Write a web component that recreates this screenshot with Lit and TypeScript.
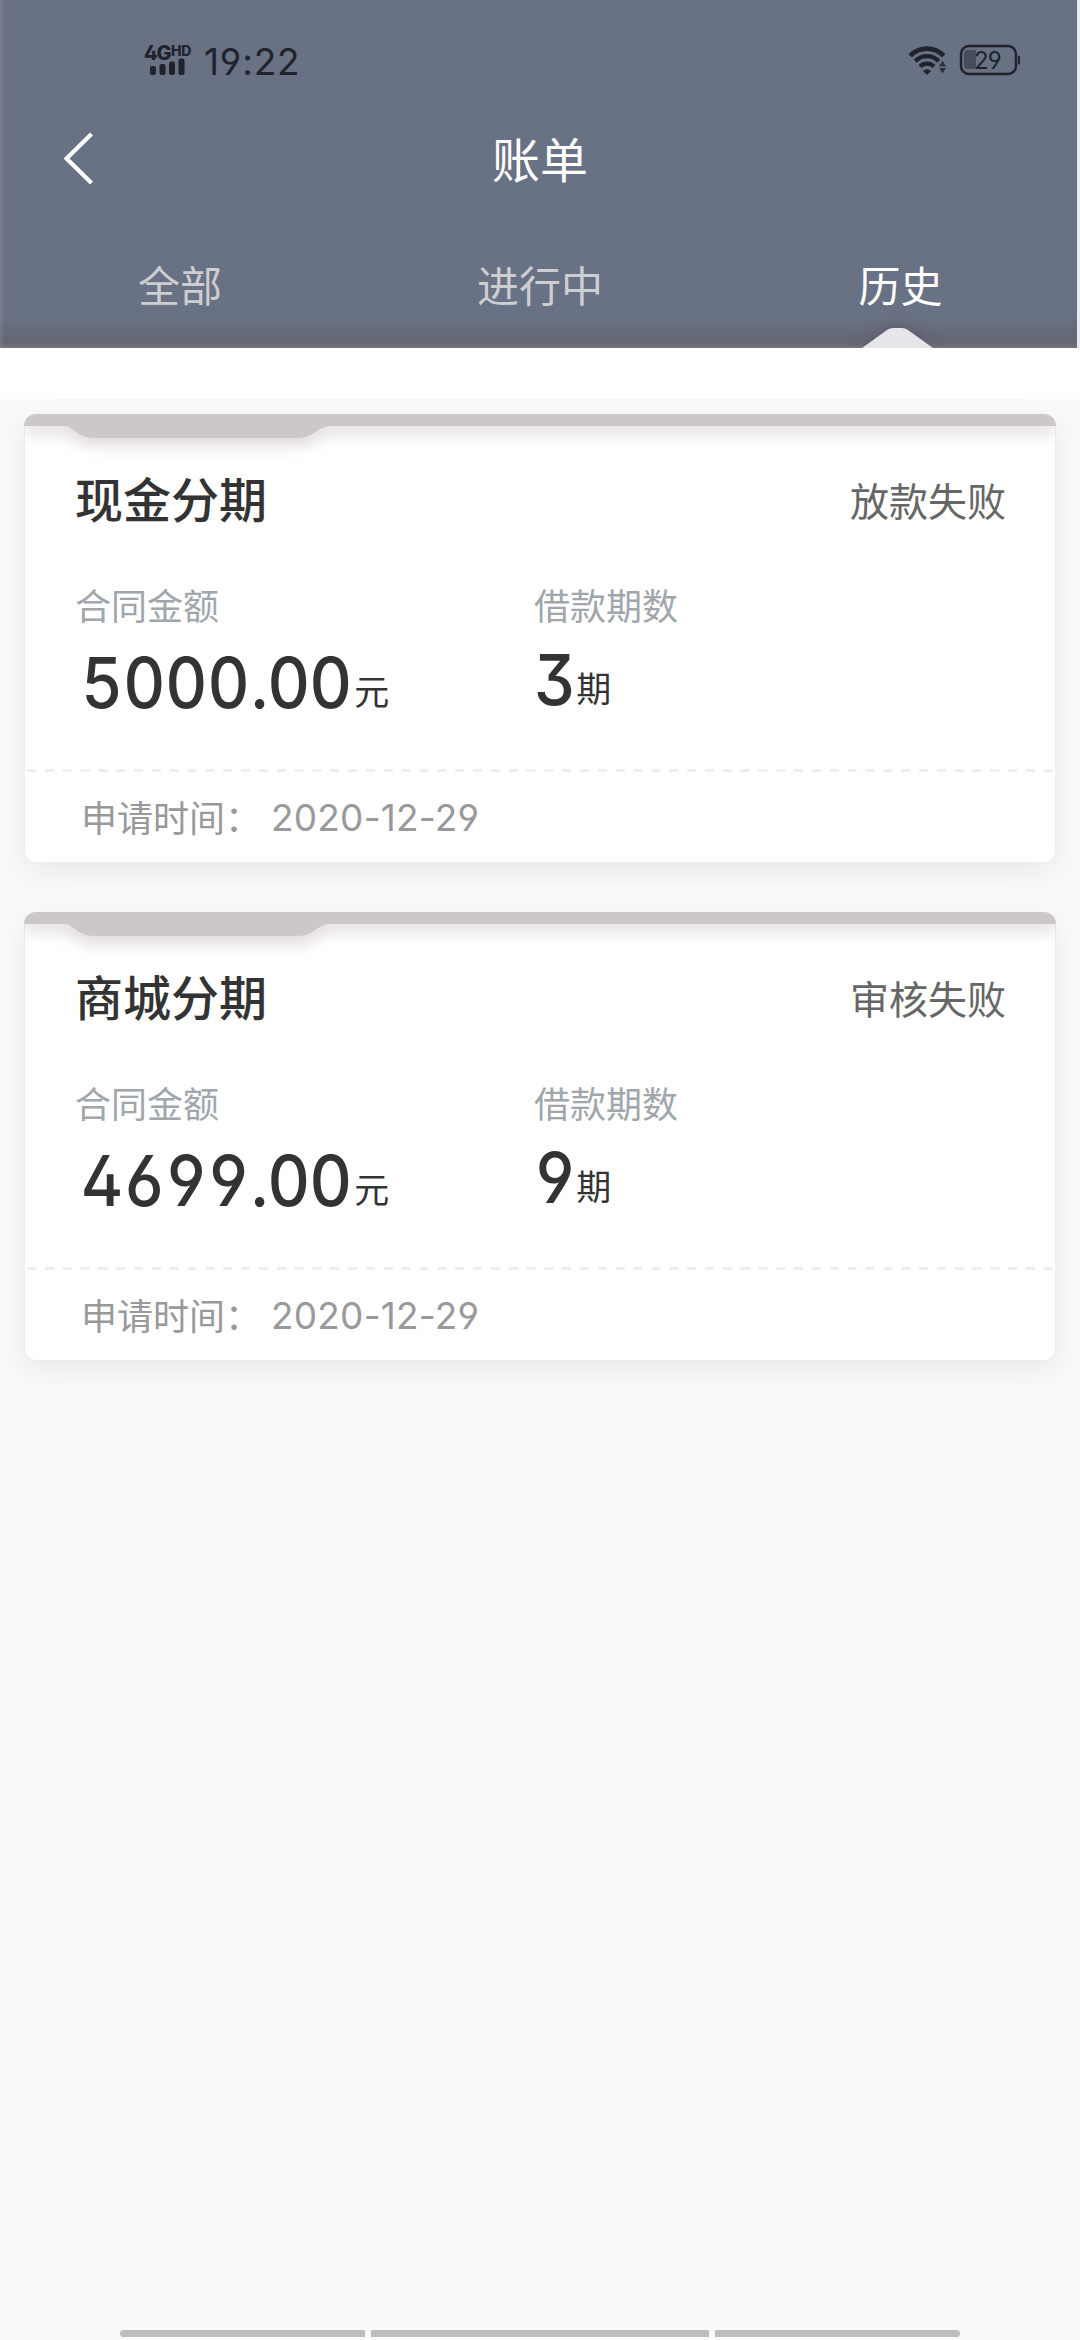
import { LitElement, html, css } from "lit";
import { customElement, property, state } from "lit/decorators.js";
import { classMap } from "lit/directives/class-map.js";

interface Bill {
  name: string;
  status: string;
  amount: string;
  periods: string;
  date: string;
}

@customElement("phone-status")
class PhoneStatus extends LitElement {
  static styles = css`
    :host {
      display: flex;
      justify-content: space-between;
      height: 120px;
      box-sizing: border-box;
      padding: 40px 56px 0 144px;
      color: #20232d;
      font-family: Inter, "Liberation Sans", sans-serif;
      font-feature-settings: "ss01";
    }
    .group {
      display: flex;
      height: 40px;
    }
    .signal {
      display: flex;
      flex-direction: column;
      width: 49px;
      padding-top: 4px;
    }
    .network {
      display: flex;
      height: 15px;
      font-weight: 800;
    }
    .gen {
      width: 27px;
      font-size: 20px;
      line-height: 18px;
      letter-spacing: -1.2px;
    }
    .hd {
      font-size: 14px;
      line-height: 13px;
      letter-spacing: -0.2px;
    }
    .bars {
      margin: -1px 0 0 5px;
    }
    .time {
      margin-left: 11px;
      font-size: 37px;
      line-height: 43px;
      letter-spacing: 0.8px;
    }
    .wifi {
      margin: 5px 11px 0 0;
    }
    .battery {
      position: relative;
      width: 62px;
      height: 32px;
      margin-top: 4px;
    }
    .level {
      position: absolute;
      left: 15px;
      top: 0;
      font-size: 24px;
      line-height: 33px;
      letter-spacing: -1px;
    }
  `;

  render() {
    return html`
      <div class="group">
        <div class="signal">
          <div class="network"><span class="gen">4G</span><span class="hd">HD</span></div>
          <svg class="bars" width="36" height="17" viewBox="0 0 36 17" fill="currentColor">
            <rect x="1" y="8" width="6" height="9" rx="2" />
            <rect x="10.5" y="6" width="6" height="11" rx="2" />
            <rect x="20" y="3.5" width="6" height="13.5" rx="2" />
            <rect x="29.500" y="0.500" width="6" height="16.500" rx="2" />
          </svg>
        </div>
        <span class="time">19:22</span>
      </div>
      <div class="group">
        <svg class="wifi" width="40" height="32" viewBox="0 0 40 32" fill="none">
          <path d="M2.300 10.800A23 23 0 0 1 35.700 10.800" stroke="currentColor" stroke-width="4.600" />
          <path d="M7.300 16.300A16 16 0 0 1 30.700 16.300" stroke="currentColor" stroke-width="4.300" />
          <path d="M12 21.500A10 10 0 0 1 26 21.500" stroke="currentColor" stroke-width="4.200" />
          <path d="M19 30L15 26Q19 22.500 23 26Z" fill="currentColor" />
          <path d="M34.500 15.500L38 21.500H31ZM34.500 28.500L38 22.900H31Z" fill="currentColor" opacity="0.800" />
        </svg>
        <div class="battery">
          <svg width="62" height="32" viewBox="0 0 62 32" fill="none">
            <path d="M17 6H9Q5 6 5 10V21Q5 25 9 25H17Z" fill="#474c5b" />
            <rect x="2" y="2" width="55" height="28" rx="8" stroke="currentColor" stroke-width="2.400" />
            <path d="M59 11.500Q61 11.500 61 13V19Q61 20.500 59 20.500Z" fill="currentColor" />
          </svg>
          <span class="level">29</span>
        </div>
      </div>
    `;
  }
}

@customElement("bill-card")
class BillCard extends LitElement {
  @property({ attribute: false }) bill!: Bill;

  static styles = css`
    :host {
      display: block;
      height: 449px;
      box-sizing: border-box;
      border-radius: 12px;
      background: #fff;
      box-shadow: 0 9px 30px rgba(0, 0, 0, 0.075);
    }
    .card {
      display: flex;
      flex-direction: column;
      height: 449px;
      border-radius: 12px;
      overflow: hidden;
      box-shadow: inset 0 0 0 1px #ededed;
    }
    .cap {
      flex: none;
      height: 61px;
      overflow: hidden;
    }
    .cap svg {
      display: block;
      filter: drop-shadow(0 7px 8px rgba(90, 70, 60, 0.21));
    }
    .head {
      display: flex;
      justify-content: space-between;
      align-items: center;
      height: 50px;
      margin-top: -3px;
      padding: 0 50px 0 51px;
    }
    .name {
      font-size: 48px;
      line-height: 50px;
      font-weight: 500;
      color: #333;
    }
    .status {
      font-size: 39px;
      line-height: 50px;
      color: #666;
      margin-top: 3px;
    }
    .figures {
      display: grid;
      grid-template-columns: 459px 1fr;
      padding: 57px 51px 0;
      height: 190px;
      box-sizing: border-box;
    }
    .label {
      font-size: 36px;
      line-height: 50px;
      color: #a0a6ac;
    }
    .value {
      display: flex;
      align-items: baseline;
      height: 70px;
      margin-top: 16px;
      line-height: 70px;
      color: #333;
    }
    .amount {
      padding-left: 6px;
      margin-top: 19px;
    }
    .number {
      font-family: Inter, sans-serif;
      font-feature-settings: "ss01";
      font-size: 70px;
      font-weight: 500;
      transform: scaleX(0.93);
      transform-origin: left;
      margin-right: -3px;
    }
    .amount .number {
      margin-right: -18px;
    }
    .whole {
      font-feature-settings: "ss01", "tnum";
    }
    .unit {
      position: relative;
      top: -3px;
      font-size: 35px;
    }
    .divider {
      display: block;
      margin: 57px 0 0 2px;
    }
    .foot {
      display: flex;
      align-items: center;
      height: 90px;
      padding-left: 57px;
      font-size: 36px;
      color: #999;
    }
    .caption {
      margin-top: -3px;
    }
    .date {
      font-family: Inter, sans-serif;
      font-feature-settings: "ss01";
      font-size: 37px;
      letter-spacing: 0.2px;
      margin-left: 10px;
    }
  `;

  render() {
    const b = this.bill;
    const [whole, cents] = b.amount.split(".");
    return html`
      <article class="card">
        <div class="cap">
          <svg width="1032" height="24" viewBox="0 0 1032 24" overflow="visible">
            <path
              d="M0 0H1032V12H308C292 12 291 24 273 24H71C52 24 51 12 39 12H0Z"
              fill="#ccc8c7"
            />
          </svg>
        </div>
        <div class="head">
          <span class="name">${b.name}</span>
          <span class="status">${b.status}</span>
        </div>
        <div class="figures">
          <div>
            <div class="label">合同金额</div>
            <div class="value amount">
              <span class="number"><span class="whole">${whole}</span>.${cents}</span><span class="unit">元</span>
            </div>
          </div>
          <div>
            <div class="label">借款期数</div>
            <div class="value">
              <span class="number"><span class="whole">${b.periods}</span></span><span class="unit">期</span>
            </div>
          </div>
        </div>
        <svg class="divider" width="1028" height="3">
          <path d="M1 1.500H1027" stroke="#eee" stroke-width="3" stroke-dasharray="9 8.840" />
        </svg>
        <div class="foot"><span class="caption">申请时间：</span><span class="date">${b.date}</span></div>
      </article>
    `;
  }
}

@customElement("app-root")
class AppRoot extends LitElement {
  @state() private active = 2;

  private tabs = ["全部", "进行中", "历史"];

  private bills: Bill[] = [
    { name: "现金分期", status: "放款失败", amount: "5000.00", periods: "3", date: "2020-12-29" },
    { name: "商城分期", status: "审核失败", amount: "4699.00", periods: "9", date: "2020-12-29" },
  ];

  static styles = css`
    :host {
      display: flex;
      flex-direction: column;
      width: 1080px;
      height: 2340px;
      overflow: hidden;
      background: #fafafa;
      font-family: "Noto Sans CJK SC", "Noto Sans", sans-serif;
    }
    .top {
      flex: none;
      height: 348px;
      box-sizing: border-box;
      overflow: hidden;
      border-right: 3px solid #e9e9f0;
      background:
        linear-gradient(to right, rgba(255, 255, 255, 0.1), rgba(255, 255, 255, 0) 4px),
        linear-gradient(to bottom, rgba(98, 98, 112, 0) 318px, rgba(98, 98, 109, 0.8) 343px, #74747c 348px),
        #697184;
    }
    .bar {
      display: grid;
      grid-template-columns: 120px 1fr 117px;
      align-items: center;
      height: 80px;
      color: #fff;
    }
    .back {
      display: block;
      margin: -4px 0 0 60px;
    }
    .title {
      text-align: center;
      font-size: 48px;
      line-height: 80px;
      margin-top: -6px;
    }
    .tabs {
      display: grid;
      grid-template-columns: 360px 360px 357px;
      height: 148px;
    }
    .tab {
      display: flex;
      flex-direction: column;
      align-items: center;
      justify-content: space-between;
      padding-top: 54px;
      font-size: 42px;
      line-height: 60px;
      color: #ccced1;
    }
    .tab.on {
      color: #fff;
      padding-left: 4px;
    }
    .pointer {
      display: block;
      margin-right: 5px;
      filter: drop-shadow(0 -2px 7px rgba(80, 76, 86, 0.45));
    }
    .strip {
      flex: none;
      height: 51px;
      background: #fff;
    }
    .list {
      flex: 1;
      display: flex;
      flex-direction: column;
      gap: 49px;
      padding: 15px 24px 0;
    }
    .nav {
      display: flex;
      justify-content: center;
      gap: 6px;
      padding-bottom: 3px;
    }
    .seg {
      width: 245px;
      height: 7px;
      background: #bdbdbd;
    }
    .seg.mid {
      width: 338px;
    }
    .seg.first {
      border-radius: 4px 0 0 4px;
    }
    .seg.last {
      border-radius: 0 4px 4px 0;
    }
  `;

  render() {
    return html`
      <header class="top">
        <phone-status></phone-status>
        <div class="bar">
          <svg class="back" width="36" height="56" viewBox="0 0 36 56" fill="none">
            <path d="M31.500 4L6.500 28.500L31.500 53" stroke="#fff" stroke-width="4.200" />
          </svg>
          <span class="title">账单</span>
        </div>
        <nav class="tabs">
          ${this.tabs.map(
            (t, i) => html`
              <div class=${classMap({ tab: true, on: i === this.active })} @click=${() => (this.active = i)}>
                <span>${t}</span>
                ${i === this.active
                  ? html`<svg class="pointer" width="72" height="20" viewBox="0 0 72 20">
                      <path d="M0 20L25 2Q28 0 31 0H40Q43 0 46 2L71 20Z" fill="#e6e6ea" />
                    </svg>`
                  : null}
              </div>
            `
          )}
        </nav>
      </header>
      <div class="strip"></div>
      <main class="list">${this.bills.map((b) => html`<bill-card .bill=${b}></bill-card>`)}</main>
      <div class="nav">
        <div class="seg first"></div>
        <div class="seg mid"></div>
        <div class="seg last"></div>
      </div>
    `;
  }
}
